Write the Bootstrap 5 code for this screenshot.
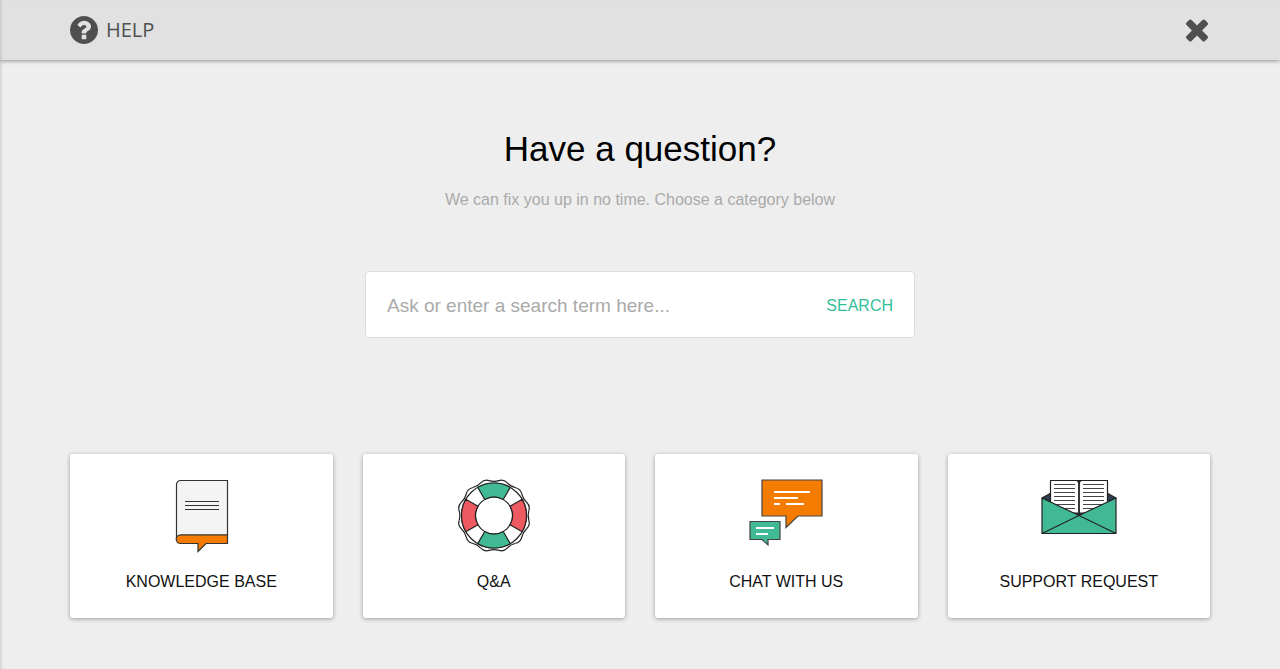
<!DOCTYPE html>
<html lang="en">
<head>
<meta charset="utf-8">
<meta name="viewport" content="width=device-width, initial-scale=1">
<title>Help</title>
<link href="https://cdn.jsdelivr.net/npm/bootstrap@5.3.0/dist/css/bootstrap.min.css" rel="stylesheet">
<style>
  body { background: #eee; color: #000; font-family: "Liberation Sans", Arial, sans-serif; min-height: 100vh; box-shadow: inset 3px 0 3px -2px rgba(0,0,0,.15); }
  .container { --bs-gutter-x: 30px; max-width: 1170px; }
  .help-bar { background: #e1e1e1; height: 60px; box-shadow: 0 1px 4px rgba(0,0,0,.4), inset 3px 0 3px -2px rgba(0,0,0,.15); }
  .help-title { font-family: "Open Sans", sans-serif; font-size: 20px; line-height: 28px; color: #4f4f4f; padding-bottom: 1px; }
  .close-help { color: #4f4f4f; line-height: 0; }
  .intro { padding-top: 67px; }
  .intro h1 { font-size: 35px; line-height: 44px; margin-bottom: 17px; }
  .intro p { font-size: 16px; line-height: 24px; color: #aaa; margin-bottom: 59px; }
  .search-box { max-width: 550px; height: 67px; background: #fff; border: 1px solid #ddd; border-radius: 4px; padding: 2px 21px 0; margin-bottom: 116px; }
  .search-box input, .search-box input:focus { background: transparent; font-size: 19px; line-height: 24px; box-shadow: none; }
  .search-box input::placeholder { color: #aaa; opacity: 1; }
  .search-box button { color: #32be99; font-size: 16px; }
  .topics { --bs-gutter-x: 30px; --bs-gutter-y: 30px; }
  .topic { background: #fff; color: #111; border-radius: 3px; padding: 25px 15px 24px; font-size: 16px; line-height: 24px; box-shadow: 0 1px 4px rgba(0,0,0,.35); }
  .topic svg { margin-bottom: 16px; }
</style>
</head>
<body>
<header class="help-bar">
  <div class="container h-100 d-flex align-items-center justify-content-between">
    <div class="d-flex align-items-center gap-2 help-title">
      <svg width="28" height="28" viewBox="128 128 1536 1536" fill="currentColor" aria-hidden="true"><path fill-rule="evenodd" d="M1024 1376v-192q0-14-9-23t-23-9h-192q-14 0-23 9t-9 23v192q0 14 9 23t23 9h192q14 0 23-9t9-23zM1280 704q0-88-55.500-163t-138.500-116-170-41q-243 0-371 213-15 24 8 42l132 100q7 6 19 6 16 0 25-12 53-68 86-92 34-24 86-24 48 0 85.500 26t37.500 59q0 38-20 61t-68 45q-63 28-115.500 86.500t-52.500 125.500v36q0 14 9 23t23 9h192q14 0 23-9t9-23q0-19 21.500-49.500t54.500-49.500q32-18 49-28.500t46-35 44.500-48 28-60.500 12.500-81zM1664 896q0 209-103 385.500t-279.500 279.500-385.500 103-385.500-103-279.500-279.500-103-385.500 103-385.500 279.500-279.500 385.500-103 385.500 103 279.500 279.500 103 385.500z"/></svg>
      <span>HELP</span>
    </div>
    <button type="button" class="close-help btn p-0 border-0" aria-label="Close"><svg width="26" height="26" viewBox="194 230 1404 1404" fill="currentColor"><path d="M1490 1322q0 40-28 68l-136 136q-28 28-68 28t-68-28l-294-294-294 294q-28 28-68 28t-68-28l-136-136q-28-28-28-68t28-68l294-294-294-294q-28-28-28-68t28-68l136-136q28-28 68-28t68 28l294 294 294-294q28-28 68-28t68 28l136 136q28 28 28 68t-28 68l-294 294 294 294q28 28 28 68z"/></svg></button>
  </div>
</header>
<main class="container pb-5">
  <section class="intro text-center">
    <h1 class="fw-light">Have a question?</h1>
    <p>We can fix you up in no time. Choose a category below</p>
  </section>
  <form class="search-box d-flex align-items-center mx-auto">
    <input type="text" class="form-control border-0 p-0" placeholder="Ask or enter a search term here..." aria-label="Search term">
    <button type="submit" class="btn p-0 border-0">SEARCH</button>
  </form>
  <nav class="row row-cols-1 row-cols-sm-2 row-cols-lg-4 topics" aria-label="Help topics">
    <div class="col"><a href="#" class="topic d-flex flex-column align-items-center text-decoration-none">
      <svg width="76" height="75" viewBox="0 0 76 75" aria-hidden="true" stroke="#333" stroke-width="1.200">
        <path d="M13.500 60V5.500a4 4 0 0 1 4-4H64.500V56H17.500z" fill="#f4f4f4"/>
        <path d="M17.500 56H64.500V64.500H43L35 72.500V64.500H17.500a4.250 4.250 0 0 1 0-8.500z" fill="#f57c00"/>
        <path d="M22 22.500h34M22 26.500h34M22 30.500h34"/>
      </svg>
      <span>KNOWLEDGE BASE</span></a></div>
    <div class="col"><a href="#" class="topic d-flex flex-column align-items-center text-decoration-none">
      <svg width="76" height="75" viewBox="-38 -36.500 76 75" overflow="visible" aria-hidden="true" stroke="#222" stroke-width="1.200" fill="none">
        <defs>
          <path id="rope" d="M-4.870-34.860Q0-33.400 4.870-34.860Q9.730-36.320 13.220-32.620"/>
          <path id="band" d="M-16.250-28.150A32.500 32.500 0 0 1 16.250-28.150L9.250-16.020A18.500 18.500 0 0 0-9.250-16.020z"/>
        </defs>
        <use href="#rope"/><use href="#rope" transform="rotate(30)"/><use href="#rope" transform="rotate(60)"/><use href="#rope" transform="rotate(90)"/><use href="#rope" transform="rotate(120)"/><use href="#rope" transform="rotate(150)"/><use href="#rope" transform="rotate(180)"/><use href="#rope" transform="rotate(210)"/><use href="#rope" transform="rotate(240)"/><use href="#rope" transform="rotate(270)"/><use href="#rope" transform="rotate(300)"/><use href="#rope" transform="rotate(330)"/>
        <circle r="32.500" fill="#fff"/>
        <circle r="18.500"/>
        <use href="#band" fill="#41b995"/><use href="#band" fill="#41b995" transform="rotate(180)"/>
        <use href="#band" fill="#ee5a62" transform="rotate(90)"/><use href="#band" fill="#ee5a62" transform="rotate(270)"/>
      </svg>
      <span>Q&amp;A</span></a></div>
    <div class="col"><a href="#" class="topic d-flex flex-column align-items-center text-decoration-none">
      <svg width="76" height="75" viewBox="0 0 76 75" aria-hidden="true" stroke="#444" stroke-width="1.200">
        <path d="M14 1H74V37H50L38 48.500V37H14z" fill="#f57c00"/>
        <path d="M2 42.500H32V60.500H20V66L14 60.500H2z" fill="#41b995"/>
        <path d="M26 13h36M26 19h24M26 25h6M38 25h18M8 49h18M8 55h12" stroke="#fff" stroke-width="2"/>
      </svg>
      <span>CHAT WITH US</span></a></div>
    <div class="col"><a href="#" class="topic d-flex flex-column align-items-center text-decoration-none">
      <svg width="76" height="75" viewBox="0 0 76 75" aria-hidden="true" stroke="#222" stroke-width="1.200" stroke-linejoin="round">
        <path d="M1 19L10 14H66L75 19L38 38z" fill="#2c3e50"/>
        <path d="M9.500 1.500H66.500V34H9.500z" fill="#fff"/>
        <path d="M36 1.500H40L38 4z" fill="#222"/>
        <path d="M38 3V36" stroke-width="1.800"/>
        <path d="M13 5.500h21M13 9.500h21M13 13.500h21M13 17.500h21M13 21.500h21M13 25.500h21M13 29.500h21M42 5.500h21M42 9.500h21M42 13.500h21M42 17.500h21M42 21.500h21M42 25.500h21M42 29.500h21" stroke="#444"/>
        <path d="M1 19L38 36.500L75 19V54.500H1z" fill="#41b995"/>
        <path d="M1 54.500L38 36.500L75 54.500" fill="none"/>
      </svg>
      <span>SUPPORT REQUEST</span></a></div>
  </nav>
</main>
<script src="https://cdn.jsdelivr.net/npm/bootstrap@5.3.0/dist/js/bootstrap.bundle.min.js"></script>
</body>
</html>
